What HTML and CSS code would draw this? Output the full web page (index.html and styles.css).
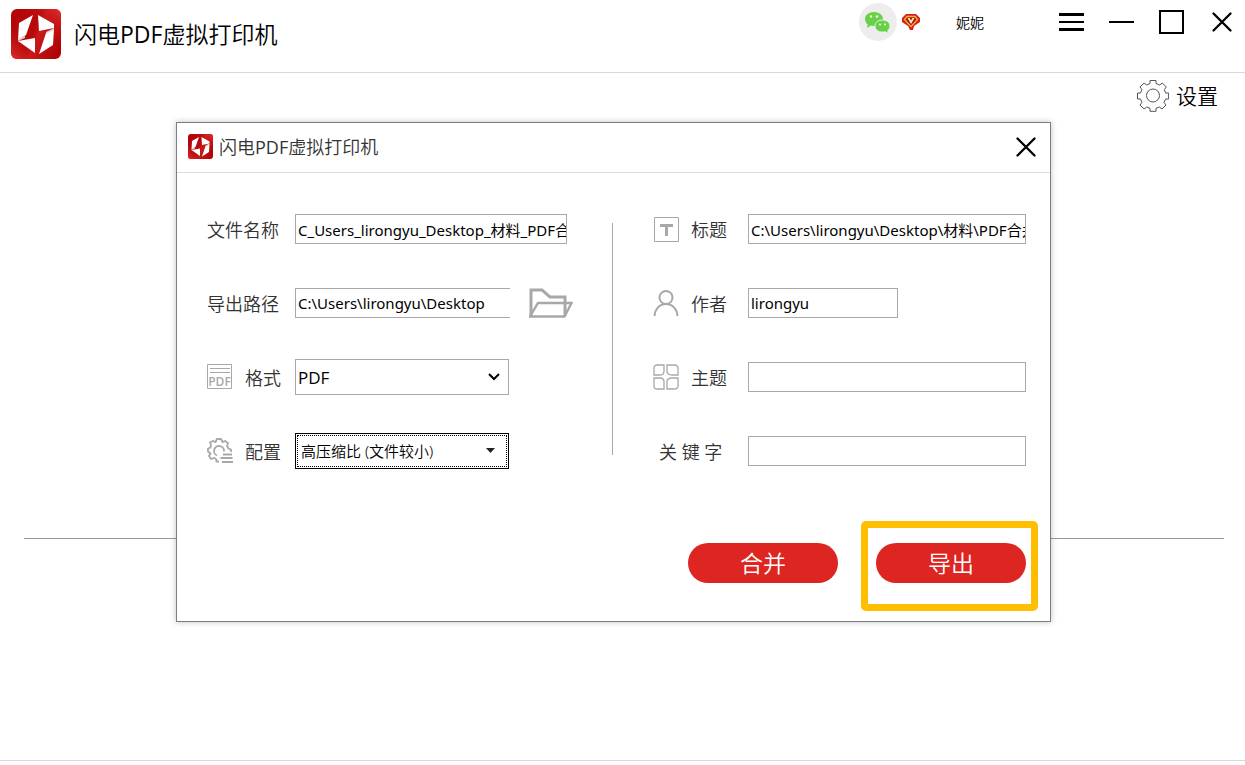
FILE: index.html
```
<!DOCTYPE html>
<html lang="zh-CN">
<head>
<meta charset="utf-8">
<title>闪电PDF虚拟打印机</title>
<link rel="stylesheet" href="styles.css">
</head>
<body>
<svg class="defs" width="0" height="0" aria-hidden="true">
  <defs>
    <linearGradient id="red" x1="0" y1="0.3" x2="1" y2="0.7">
      <stop offset="0" stop-color="#b30406"/><stop offset="0.45" stop-color="#b80a0b"/><stop offset="0.55" stop-color="#c81a1a"/><stop offset="1" stop-color="#b00305"/>
    </linearGradient>
    <linearGradient id="shine" x1="0" y1="1" x2="1" y2="0">
      <stop offset="0" stop-color="#e23030"/><stop offset="0.4" stop-color="#b80a0b" stop-opacity="0"/><stop offset="0.6" stop-color="#b80a0b" stop-opacity="0"/><stop offset="1" stop-color="#e23030"/>
    </linearGradient>
    <symbol id="logo" viewBox="0 0 50 50">
      <rect width="50" height="50" rx="6" fill="url(#red)"/>
      <rect width="50" height="50" rx="6" fill="url(#shine)"/>
      <path d="M22 6 8 14 7 31 15 26zM7 32 24 29V44zM27 6 43 15V19L28 22zM43 20 35 24 28 45 42 36z" fill="#fff"/>
      <path d="M7 30 14 27V29L7 32zM35 23 43 19V21L35 25z" fill="#e3d2d2"/>
    </symbol>
  </defs>
</svg>
<header class="topbar">
  <svg class="topbar-logo" aria-hidden="true"><use href="#logo"/></svg>
  <h1 class="topbar-title">闪电<span class="latin">PDF</span>虚拟打印机</h1>
  <div class="account">
    <svg class="avatar" viewBox="0 0 38 38" aria-hidden="true">
      <circle cx="19" cy="19" r="19" fill="#ededed"/>
      <path d="M6 16c0-4 4-7 9-7s9 3 9 7-4 7-9 7c-1 0-2 0-3-.4L8 25l.7-3.600C7 20 6 18 6 16z" fill="#67d148"/>
      <path d="M16 23c0-3.600 3.400-6 7.500-6s7.500 2.400 7.500 6c0 2-1 3.400-2.200 4.400l.4 3-2.900-1.600c-1 .2-1.800.3-2.800.3-4.100 0-7.500-2.500-7.500-6.100z" fill="#67d148" stroke="#ededed" stroke-width="1"/>
      <g fill="#f4fff0"><circle cx="12" cy="13.500" r="1.200"/><circle cx="18" cy="13.500" r="1.200"/><circle cx="21" cy="21.500" r="1"/><circle cx="26" cy="21.500" r="1"/></g>
    </svg>
    <svg class="badge" viewBox="0 0 18 16" aria-hidden="true">
      <path d="M4 0h10l4 4v4l-6 4-1 4H8l-2-4-6-4V4z" fill="#d5201c"/>
      <path d="M5 2.500h8l2.500 3L9 12.500 2.500 5.500z" fill="#b80e0c" stroke="#f2b632" stroke-width="1.300"/>
      <path d="M5.500 4 9 10l3.500-6-2 0L9 6.500 7.500 4z" fill="#fff1d6"/>
    </svg>
    <span class="user-name">妮妮</span>
  </div>
  <div class="window-tools">
    <button class="icon-button" aria-label="菜单"><svg viewBox="0 0 26 26"><path d="M0 5.500h25M0 20.500h25" stroke="#000" stroke-width="3"/><path d="M0 13h25" stroke="#000" stroke-width="2"/></svg></button>
    <button class="icon-button" aria-label="最小化"><svg viewBox="0 0 26 26"><path d="M0 13h25" stroke="#000" stroke-width="2"/></svg></button>
    <button class="icon-button" aria-label="最大化"><svg viewBox="0 0 26 26"><rect x="1" y="2" width="23" height="22" fill="none" stroke="#000" stroke-width="2"/></svg></button>
    <button class="icon-button" aria-label="关闭"><svg viewBox="0 0 26 26"><path d="m4.500 4.500 17 17m0-17-17 17" stroke="#000" stroke-width="2.300" stroke-linecap="round"/></svg></button>
  </div>
</header>
<main class="workspace">
  <section class="upper">
    <button class="settings">
      <svg class="settings-icon" viewBox="0 0 32 32" fill="none" stroke="#555" aria-hidden="true">
        <circle cx="16" cy="15.500" r="6.500"/>
        <path d="M13 .5h6v3l3.700 1.500 2.600-2 4 4-2 2.600 1.300 3.400h3v6h-3L27 22.400l2 2.600-4 4-2.600-2-3.400 1.300v3h-6v-3L9.600 27 7 29l-4-4 2-2.600L3.500 19h-3v-6h3L5 9.600 3 7l4-4 2.600 2L13 3.500z"/>
      </svg>
      <span>设置</span>
    </button>
  </section>
  <section class="lower"></section>

  <div class="dialog" role="dialog" aria-labelledby="dialog-title">
    <div class="dialog-head">
      <svg class="dialog-logo" aria-hidden="true"><use href="#logo"/></svg>
      <h2 class="dialog-title" id="dialog-title">闪电<span class="latin">PDF</span>虚拟打印机</h2>
      <button class="icon-button" aria-label="关闭对话框"><svg viewBox="0 0 26 26"><path d="m4.500 4.500 17 17m0-17-17 17" stroke="#000" stroke-width="2.300" stroke-linecap="round"/></svg></button>
    </div>
    <form class="dialog-body">
      <div class="columns">
        <div class="fields">
          <div class="row">
            <label class="label" for="file-name">文件名称</label>
            <input class="text file-name" id="file-name" type="text" value="C_Users_lirongyu_Desktop_材料_PDF合并">
          </div>
          <div class="row">
            <label class="label" for="path">导出路径</label>
            <input class="text path" id="path" type="text" value="C:\Users\lirongyu\Desktop">
            <button class="browse" type="button" aria-label="选择文件夹">
              <svg viewBox="0 0 44 30" fill="none" stroke="#a8a8a8" stroke-width="3" aria-hidden="true"><path d="M2 29V2h11l8 7h15v19"/><path d="M1 28.500 9 15h33.500l-7 13.500z" stroke-width="2.400"/></svg>
            </button>
          </div>
          <div class="row">
            <label class="label" for="format">
              <svg class="icon" viewBox="0 0 26 26" aria-hidden="true"><path d="M.5.500h24v24H.5zM3 4.500h20M3 8.500h20" fill="none" stroke="#a8a8a8"/><text class="icon-text" x="12.500" y="22" text-anchor="middle">PDF</text></svg>
              格式</label>
            <span class="select-box">
              <select class="select latin" id="format"><option>PDF</option></select>
              <svg class="arrow" viewBox="0 0 12 12" aria-hidden="true"><path d="m1 3 5 5 5-5" fill="none" stroke="#000" stroke-width="2"/></svg>
            </span>
          </div>
          <div class="row">
            <label class="label" for="config">
              <svg class="icon" viewBox="0 0 26 26" fill="none" stroke="#a8a8a8" stroke-width="1.800" aria-hidden="true">
                <path d="M12 23.500H9.500L9 21l-2-1-3 1-2-3 1.500-2.500L1 13.500v-3l2.500-1L4 7 3 4.500 6 3l2.500 1L10 1h4l1.500 3L18 3l3 2-1 3 1.500 2.500 2.500 1v2.500"/>
                <path d="M10 17.500a5 5 0 1 1 7-4"/>
                <path d="M16 16.500h9M13.500 20h12M15 24h11"/>
              </svg>
              配置</label>
            <span class="select-box">
              <select class="select config" id="config"><option>高压缩比 (文件较小)</option></select>
              <svg class="arrow" viewBox="0 0 12 12" aria-hidden="true"><path d="M-2 3h9L2.500 8z" fill="#222"/></svg>
            </span>
          </div>
        </div>
        <div class="divider"></div>
        <div class="fields info">
          <div class="row">
            <label class="label" for="title">
              <svg class="icon" viewBox="0 0 26 26" aria-hidden="true"><path d="M1.500 1.500h24v24h-24z" fill="none" stroke="#a8a8a8"/><path d="M7 8h13v3h-5v9h-3v-9H7z" fill="#a8a8a8"/></svg>
              标题</label>
            <input class="text" id="title" type="text" value="C:\Users\lirongyu\Desktop\材料\PDF合并">
          </div>
          <div class="row">
            <label class="label" for="author">
              <svg class="icon" viewBox="0 0 26 26" fill="none" stroke="#a8a8a8" stroke-width="2" aria-hidden="true"><circle cx="13" cy="7.500" r="6.500"/><path d="M1.500 26C2 19 6.500 14 13 14S24 19 24.500 26"/></svg>
              作者</label>
            <input class="text author" id="author" type="text" value="lirongyu">
          </div>
          <div class="row">
            <label class="label" for="subject">
              <svg class="icon" viewBox="0 0 26 26" fill="none" stroke="#a8a8a8" stroke-width="1.300" aria-hidden="true"><path d="M4 1h7v6q0 4-4 4H1V4q0-3 3-3zM14 1h7q4 0 4 3v7h-6q-5 0-5-4zM1 14h6q4 0 4 4v7H4q-3 0-3-3zM19 14h6v8q0 3-4 3h-7v-7q0-4 5-4z"/></svg>
              主题</label>
            <input class="text" id="subject" type="text">
          </div>
          <div class="row">
            <label class="label keyword" for="keyword">关 键 字</label>
            <input class="text" id="keyword" type="text">
          </div>
        </div>
      </div>
      <div class="actions">
        <button class="pill" type="button">合并</button>
        <span class="highlighted"><button class="pill" type="button">导出</button></span>
      </div>
    </form>
  </div>
</main>
</body>
</html>
```
FILE: styles.css
```
* { box-sizing: border-box; }

body {
  margin: 0;
  min-height: 100vh;
  display: flex;
  flex-direction: column;
  padding-bottom: 4px;
  background: #fff;
  color: #000;
  font-family: "Noto Sans", "Noto Sans CJK SC", sans-serif;
  font-size: 15px;
  font-weight: 350;
}

.defs { position: absolute; }

button, input, select {
  margin: 0;
  font: inherit;
  color: inherit;
}

button {
  padding: 0;
  border: 0;
  background: none;
}

svg { display: block; }

.topbar {
  display: flex;
  align-items: flex-start;
  height: 73px;
  padding: 0 10px 0 11px;
  border-bottom: 1px solid #d9d9d9;
}

.topbar-logo {
  width: 50px;
  height: 50px;
  margin-top: 9px;
}

.topbar-title {
  margin: 17px auto 0 13px;
  font-size: 23px;
  line-height: 34px;
  font-weight: 350;
}

.latin {
  font-family: "Open Sans", sans-serif;
  font-weight: 400;
}

.account {
  display: flex;
  align-items: center;
  height: 44px;
}

.avatar { width: 38px; height: 38px; }
.badge { width: 18px; height: 16px; margin: 0 36px 0 5px; }
.user-name { font-size: 14px; }

.window-tools {
  display: flex;
  gap: 24px;
  margin: 9px 0 0 75px;
}

.icon-button, .icon-button svg {
  width: 26px;
  height: 26px;
}

.workspace {
  position: relative;
  flex: 1;
  display: flex;
  flex-direction: column;
  border-bottom: 1px solid #d9d9d9;
}

.upper {
  flex: 466 0 0;
  margin: 0 21px 0 24px;
  border-bottom: 1px solid #999;
}

.lower { flex: 221 0 0; }

.settings {
  display: flex;
  align-items: center;
  gap: 7px;
  margin: 6px 6px 0 auto;
  font-size: 21px;
  line-height: 34px;
}

.settings-icon { width: 32px; height: 32px; }

.dialog {
  position: absolute;
  top: 49px;
  left: 176px;
  right: 194px;
  background: #fff;
  border: 1px solid #7d7d7d;
  box-shadow: 0 0 6px rgba(0, 0, 0, 0.25);
  color: #333;
}

.dialog-head {
  display: flex;
  align-items: center;
  height: 50px;
  padding: 0 11px 2px;
  border-bottom: 1px solid #dcdcdc;
}

.dialog-logo { width: 25px; height: 25px; }

.dialog-title {
  margin: 0 auto 0 6px;
  font-size: 18px;
  line-height: 24px;
  font-weight: 350;
}

.dialog-body { padding: 38px 24px 38px 30px; }

.columns {
  display: grid;
  grid-template-columns: minmax(0, 365fr) 1px minmax(0, 373fr);
  column-gap: 40px;
}

.fields {
  display: flex;
  flex-direction: column;
  gap: 38px;
}

.row {
  display: flex;
  align-items: center;
  height: 36px;
}

.label {
  display: flex;
  align-items: center;
  gap: 12px;
  flex: 0 0 88px;
  font-size: 18px;
  white-space: nowrap;
}

.info .label { flex-basis: 95px; }
.info .keyword { padding-left: 6px; }

.icon { width: 26px; height: 26px; overflow: visible; }

.icon-text {
  font-family: "Open Sans", sans-serif;
  font-size: 12px;
  font-weight: 600;
  fill: #a8a8a8;
}

.text {
  flex: 1;
  min-width: 0;
  height: 30px;
  padding: 0 0 0 2px;
  border: 1px solid #a9a9ad;
  background: #fff;
  color: #000;
  font-weight: 400;
}

.file-name { flex: 0 1 272px; }
.path { flex: 0 0 215px; border-right: 0; }
.author { flex: 0 1 150px; }

.browse {
  flex: 0 0 44px;
  height: 30px;
  margin-left: 19px;
}

.select-box {
  display: grid;
  align-items: center;
  flex: 0 1 214px;
}

.select, .arrow { grid-area: 1 / 1; }

.select {
  width: 100%;
  height: 36px;
  padding: 0 24px 0 2px;
  border: 1px solid #a9a9ad;
  border-radius: 0;
  appearance: none;
  background: #fff;
  color: #000;
  font-size: 17px;
}

.config {
  padding-left: 5px;
  border-color: #000;
  outline: 1px dotted #000;
  outline-offset: -3px;
  font-size: 15px;
}

.arrow {
  width: 12px;
  height: 12px;
  margin-right: 9px;
  justify-self: end;
  pointer-events: none;
  overflow: visible;
}

.divider {
  margin: 12px 0 14px;
  background: #a9a9ad;
}

.actions {
  display: flex;
  justify-content: flex-end;
  gap: 38px;
  margin-top: 74px;
}

.highlighted { position: relative; }

.highlighted::after {
  content: "";
  position: absolute;
  inset: -22px -12px -28px -15px;
  border: 7px solid #ffbf00;
  border-radius: 5px;
  pointer-events: none;
}

.pill {
  display: block;
  width: 150px;
  height: 40px;
  border-radius: 20px;
  background: #dd2521;
  color: #fff;
  font-size: 23px;
  line-height: 40px;
}
```
